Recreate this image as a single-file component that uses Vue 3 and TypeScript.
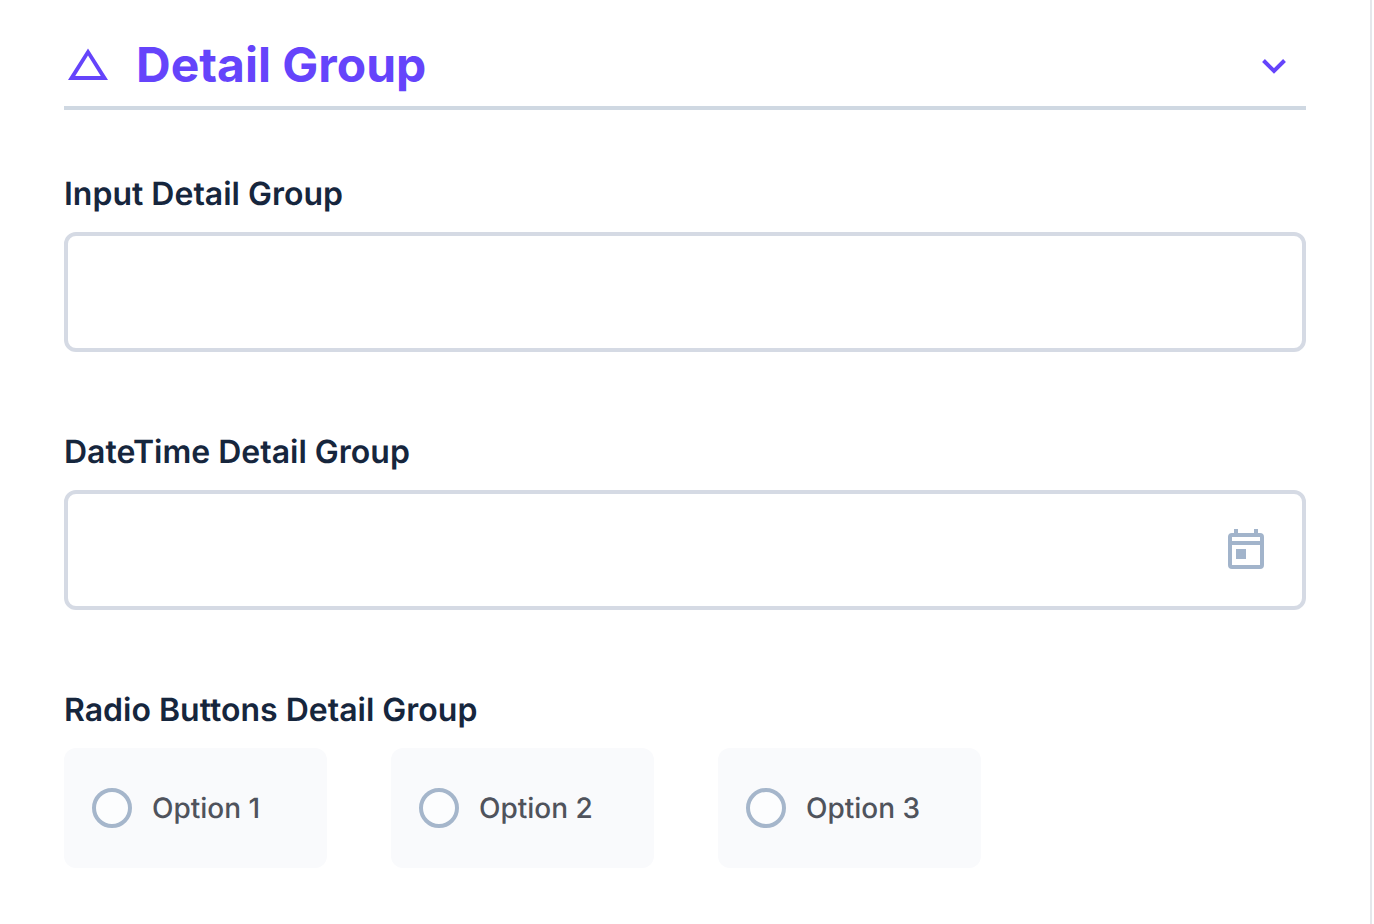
<script setup lang="ts">
import { ref } from 'vue'

const open = ref(true)
const text = ref('')
const date = ref('')
const choice = ref('')
const options: string[] = ['Option 1', 'Option 2', 'Option 3']
</script>

<template>
  <main class="panel">
    <h1 class="heading">
      <button class="toggle" type="button" :aria-expanded="open" @click="open = !open">
        <svg class="icon" viewBox="0 0 24 24" aria-hidden="true">
          <path fill="currentColor" d="M12 7.77 18.39 18H5.61L12 7.77M12 4.2 2 20h20L12 4.2Z" />
        </svg>
        <span class="title">Detail Group</span>
        <svg class="chevron" viewBox="0 0 48 48" aria-hidden="true">
          <path d="M13.5 20.5 24 31 34.5 20.5" fill="none" stroke="currentColor" stroke-width="4" />
        </svg>
      </button>
    </h1>
    <form v-show="open" class="fields" @submit.prevent>
      <div class="field">
        <label class="label" for="detail-input">Input Detail Group</label>
        <div class="box"><input id="detail-input" v-model="text" class="control" type="text" /></div>
      </div>
      <div class="field">
        <label class="label" for="detail-date">DateTime Detail Group</label>
        <div class="box">
          <input id="detail-date" v-model="date" class="control" type="text" />
          <button class="picker" type="button" aria-label="Choose date">
            <svg viewBox="0 0 48 48" aria-hidden="true">
              <path fill="currentColor" fill-rule="evenodd" d="M12 3h4v4h16V3h4v4h2a4 4 0 0 1 4 4v28a4 4 0 0 1-4 4H10a4 4 0 0 1-4-4V11a4 4 0 0 1 4-4h2ZM10 11v4h28v-4ZM10 19v20h28V19ZM14 23h10v10H14Z" />
            </svg>
          </button>
        </div>
      </div>
      <fieldset class="field">
        <legend class="label">Radio Buttons Detail Group</legend>
        <div class="options">
          <label v-for="option in options" :key="option" class="option">
            <input v-model="choice" class="radio" type="radio" name="detail-option" :value="option" />
            <span>{{ option }}</span>
          </label>
        </div>
      </fieldset>
    </form>
  </main>
</template>

<style>
body {
  background: #fff;
}
</style>

<style scoped>
.panel {
  box-sizing: border-box;
  min-height: 100vh;
  margin-right: 2px;
  padding: 32px 64px 56px;
  border-right: 2px solid #e5e7eb;
  background: #fff;
  font-family: Inter, "Liberation Sans", sans-serif;
  text-rendering: geometricPrecision;
  color: #16263d;
}
.heading {
  margin: 0;
  border-bottom: 4px solid #cfd8e2;
}
.toggle {
  display: flex;
  align-items: center;
  width: 100%;
  height: 74px;
  padding: 0 8px 10px 0;
  border: 0;
  background: none;
  color: #6544fb;
  font: inherit;
  font-size: 48px;
  font-weight: 700;
  text-align: left;
  cursor: pointer;
}
.icon,
.chevron {
  flex: none;
  width: 48px;
  height: 48px;
}
.title {
  flex: 1;
  margin-left: 24px;
}
.fields {
  display: flex;
  flex-direction: column;
  gap: 76px;
  padding-top: 60px;
}
.field {
  min-width: 0;
  margin: 0;
  padding: 0;
  border: 0;
}
.label {
  display: block;
  padding: 0 0 14px;
  font-size: 32px;
  font-weight: 600;
  line-height: 48px;
}
.box {
  display: flex;
  align-items: center;
  box-sizing: border-box;
  height: 120px;
  padding: 0 32px;
  border: 4px solid #d5dae4;
  border-radius: 12px;
}
.control {
  flex: 1;
  min-width: 0;
  height: 100%;
  padding: 0;
  border: 0;
  outline: 0;
  background: none;
  color: inherit;
  font: inherit;
  font-size: 32px;
}
.picker {
  width: 48px;
  height: 48px;
  padding: 0;
  border: 0;
  background: none;
  color: #a2b4cb;
  cursor: pointer;
}
.picker svg {
  display: block;
}
.options {
  display: flex;
  flex-wrap: wrap;
  gap: 64px;
}
.option {
  display: flex;
  align-items: center;
  gap: 20px;
  box-sizing: border-box;
  min-width: 263px;
  height: 120px;
  padding: 0 28px;
  border-radius: 12px;
  background: #f9fafc;
  color: #4f535c;
  font-size: 28px;
  font-weight: 500;
  cursor: pointer;
}
.radio {
  appearance: none;
  box-sizing: border-box;
  width: 40px;
  height: 40px;
  margin: 0;
  border: 4px solid #a5b6cb;
  border-radius: 50%;
  background: #fcfdfe;
}
.radio:checked {
  border: 12px solid #6544fb;
}
</style>
